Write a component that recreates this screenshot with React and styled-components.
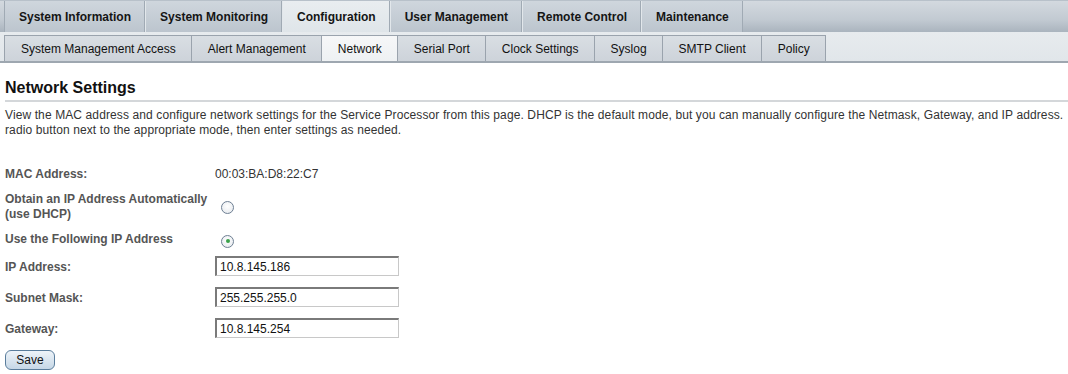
import React, { useState } from 'react';
import styled, { createGlobalStyle } from 'styled-components';

const mainTabs = [
  'System Information',
  'System Monitoring',
  'Configuration',
  'User Management',
  'Remote Control',
  'Maintenance',
];

const subTabs = [
  'System Management Access',
  'Alert Management',
  'Network',
  'Serial Port',
  'Clock Settings',
  'Syslog',
  'SMTP Client',
  'Policy',
];

const App = () => {
  const [mode, setMode] = useState('static');

  return (
    <>
      <GlobalStyle />
      <Page>
        <MainBar>
          {mainTabs.map(t => (
            <MainTab key={t} $active={t === 'Configuration'}>{t}</MainTab>
          ))}
        </MainBar>
        <SubBar>
          {subTabs.map(t => (
            <SubTab key={t} $active={t === 'Network'}>{t}</SubTab>
          ))}
        </SubBar>
        <Content>
          <Title>Network Settings</Title>
          <Description>
            View the MAC address and configure network settings for the Service Processor from this page. DHCP is the default mode, but you can manually configure the Netmask, Gateway, and IP address.
            <br />
            radio button next to the appropriate mode, then enter settings as needed.
          </Description>
          <Form>
            <Label $h={25}>MAC Address:</Label>
            <Value>00:03:BA:D8:22:C7</Value>

            <Label $h={40}>Obtain an IP Address Automatically<br />(use DHCP)</Label>
            <Value>
              <Radio $top={9} checked={mode === 'dhcp'} onClick={() => setMode('dhcp')} />
            </Value>

            <Label $h={28}>Use the Following IP Address</Label>
            <Value>
              <Radio $top={2} checked={mode === 'static'} onClick={() => setMode('static')} />
            </Value>

            <Label $h={31}>IP Address:</Label>
            <Value><Field defaultValue="10.8.145.186" /></Value>

            <Label $h={31}>Subnet Mask:</Label>
            <Value><Field defaultValue="255.255.255.0" /></Value>

            <Label $h={31}>Gateway:</Label>
            <Value><Field defaultValue="10.8.145.254" /></Value>
          </Form>
          <SaveButton>Save</SaveButton>
        </Content>
      </Page>
    </>
  );
};

const Radio = ({ checked, onClick, $top }) => (
  <RadioOuter $top={$top} onClick={onClick}>
    {checked && <RadioDot />}
  </RadioOuter>
);

export default App;

const GlobalStyle = createGlobalStyle`
  body {
    margin: 0;
    background: #ffffff;
    font-family: "Liberation Sans", Arial, sans-serif;
    font-size: 12px;
    color: #333;
  }
`;

const Page = styled.div`
  width: 1068px;
  height: 374px;
  overflow: hidden;
  background: #fff;
`;

const MainBar = styled.div`
  display: flex;
  height: 32px;
  padding-left: 4px;
  box-sizing: border-box;
  border-top: 1px solid #b8c1ca;
  background: linear-gradient(#d3d9df, #c2cad2 60%, #aab4be);
`;

const MainTab = styled.div`
  display: flex;
  align-items: center;
  padding: 0 13px 0 14px;
  font-weight: bold;
  font-size: 12px;
  color: #151515;
  border-right: 1px solid #a0aab4;
  border-left: 1px solid #e2e7eb;
  background: ${p =>
    p.$active
      ? 'linear-gradient(#e9edf0, #dfe5e9)'
      : 'linear-gradient(#cfd6dd, #bcc5ce)'};
  &:first-child {
    border-left: 1px solid #a0aab4;
  }
`;

const SubBar = styled.div`
  display: flex;
  align-items: flex-end;
  height: 31px;
  padding-left: 4px;
  box-sizing: border-box;
  background: linear-gradient(#e7ebee, #e1e6ea);
  border-bottom: 2px solid #9ea7b0;
`;

const SubTab = styled.div`
  display: flex;
  align-items: center;
  height: 25px;
  padding: 0 15px 0 16px;
  font-size: 12px;
  color: #111;
  border: 1px solid #9aa3ad;
  border-bottom: none;
  margin-right: -1px;
  background: ${p =>
    p.$active
      ? 'linear-gradient(#f6f7f8, #eef1f3)'
      : 'linear-gradient(#d9dee3, #cdd3da)'};
`;

const Content = styled.div`
  padding: 16px 5px 0 5px;
`;

const Title = styled.h1`
  margin: 0;
  font-size: 16px;
  font-weight: bold;
  color: #111;
  padding-bottom: 3px;
  border-bottom: 2px solid #d4d7da;
  margin-right: -5px;
`;

const Description = styled.p`
  margin: 6px 0 0 0;
  font-size: 12px;
  line-height: 15px;
  letter-spacing: 0.11px;
  color: #333;
  white-space: nowrap;
`;

const Form = styled.div`
  display: grid;
  grid-template-columns: 210px 1fr;
  margin-top: 29px;
`;

const Label = styled.div`
  height: ${p => p.$h}px;
  font-weight: bold;
  color: #555;
  line-height: 15px;
`;

const Value = styled.div`
  color: #333;
  line-height: 15px;
`;

const RadioOuter = styled.span`
  display: inline-flex;
  align-items: center;
  justify-content: center;
  width: 11px;
  height: 11px;
  margin-left: 6px;
  margin-top: ${p => p.$top}px;
  border-radius: 50%;
  border: 1px solid #6e7f93;
  background: radial-gradient(circle at 50% 40%, #ffffff, #e3e7ec);
  cursor: pointer;
`;

const RadioDot = styled.span`
  width: 4px;
  height: 4px;
  border-radius: 50%;
  background: #3aa14a;
`;

const Field = styled.input`
  width: 184px;
  height: 20px;
  box-sizing: border-box;
  margin-top: -8px;
  padding: 1px 3px 0;
  font-family: "Liberation Sans", Arial, sans-serif;
  font-size: 12px;
  color: #111;
  border-top: 2px solid #7a7a7a;
  border-left: 2px solid #7a7a7a;
  border-right: 1px solid #c8c8c8;
  border-bottom: 1px solid #c8c8c8;
  background: #fff;
  outline: none;
`;

const SaveButton = styled.button`
  display: block;
  margin-top: -3px;
  width: 50px;
  height: 20px;
  padding: 0;
  font-family: "Liberation Sans", Arial, sans-serif;
  font-size: 12px;
  color: #111;
  border: 1px solid #5a7d9c;
  border-radius: 6px;
  background: linear-gradient(#eef4f9, #c6d7e6);
  cursor: pointer;
`;
